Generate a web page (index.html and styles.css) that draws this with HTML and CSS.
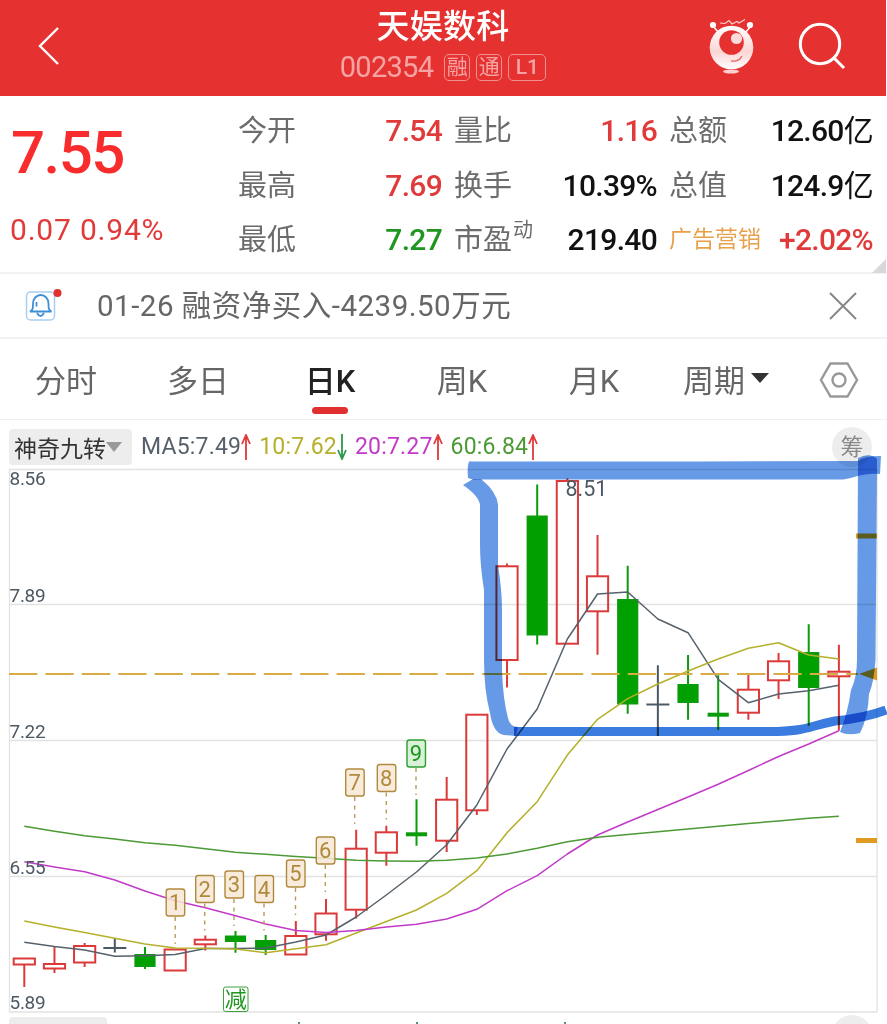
FILE: index.html
```html
<!DOCTYPE html>
<html lang="zh-CN">
<head>
    <meta charset="UTF-8">
    <meta name="viewport" content="width=device-width, initial-scale=1.0">
    <title>天娱数科 002354</title>
    <link rel="stylesheet" href="styles.css">
</head>
<body>
    <div class="app">
        <header class="header">
            <svg class="back" width="24" height="40" viewBox="0 0 24 40">
                <path d="M21 2L3 20L21 38"/>
            </svg>
            <div class="title">
                <h1>天娱数科</h1>
                <div class="code">
                    <span class="code-num">002354</span>
                    <span class="tag">融</span>
                    <span class="tag">通</span>
                    <span class="tag tag-wide">L1</span>
                </div>
            </div>
            <div class="header-icons">
                <svg width="46" height="58" viewBox="0 0 46 58">
                    <defs>
                        <linearGradient id="face" x1="0" y1="0" x2="0" y2="1">
                            <stop offset="0" stop-color="#fff"/>
                            <stop offset="0.6" stop-color="#fcd5d5"/>
                            <stop offset="1" stop-color="#fff"/>
                        </linearGradient>
                    </defs>
                    <path class="antenna" d="M4 9L10 16M42 9L36 16"/>
                    <circle cx="4" cy="8" r="3.1" fill="#fff"/>
                    <circle cx="41" cy="8" r="3.1" fill="#fff"/>
                    <path class="hair" d="M11 6L16 6.500L20 3.500L23 7L28 4.500L30 6L36 2.500"/>
                    <circle cx="22.500" cy="30.500" r="21.800" fill="url(#face)"/>
                    <circle cx="22.500" cy="25.500" r="12.300" fill="#e63131"/>
                    <circle cx="27.500" cy="21.500" r="5.600" fill="#fbdada"/>
                    <path class="smile" d="M22 44Q30 45 33 39"/>
                    <ellipse cx="22" cy="54.500" rx="8" ry="2" fill="#fbd0d0"/>
                </svg>
                <svg class="search" width="48" height="48" viewBox="0 0 48 48">
                    <circle cx="22" cy="22" r="19.700"/>
                    <path d="M36 36L46 46"/>
                </svg>
            </div>
        </header>

        <section class="quote">
            <div class="price">
                <div class="price-now">7.55</div>
                <div class="price-change">0.07 0.94%</div>
            </div>
            <div class="stats">
                <span class="label">今开</span><span class="value red">7.54</span>
                <span class="label">量比</span><span class="value red">1.16</span>
                <span class="label">总额</span><span class="value">12.60<span class="unit">亿</span></span>
                <span class="label">最高</span><span class="value red">7.69</span>
                <span class="label">换手</span><span class="value">10.39%</span>
                <span class="label">总值</span><span class="value">124.9<span class="unit">亿</span></span>
                <span class="label">最低</span><span class="value green">7.27</span>
                <span class="label">市盈<sup>动</sup></span><span class="value">219.40</span>
                <span class="label sector">广告营销</span><span class="value red">+2.02%</span>
            </div>
            <div class="corner"></div>
        </section>

        <section class="notice">
            <svg class="bell" width="38" height="34" viewBox="0 0 38 34">
                <rect x="1.500" y="4" width="28" height="28" rx="4"/>
                <path class="bell-line" d="M5 23.500C8 22 8 20 8 16C8 4 23.500 4 23.500 16C23.500 20 23.500 22 26.500 23.500ZM11.500 14V18.500M12 25Q15.500 31 19 25"/>
                <circle cx="32.500" cy="5" r="4"/>
            </svg>
            <span class="notice-text">01-26 融资净买入-4239.50万元</span>
            <svg class="close" width="30" height="30" viewBox="0 0 30 30">
                <path d="M2 2L28 28M28 2L2 28"/>
            </svg>
        </section>

        <nav class="tabs">
            <span class="tab">分时</span>
            <span class="tab">多日</span>
            <span class="tab active">日K</span>
            <span class="tab">周K</span>
            <span class="tab">月K</span>
            <span class="tab">周期<i class="caret"></i></span>
            <span class="tab">
                <svg class="settings" width="40" height="36" viewBox="0 0 40 36">
                    <path d="M11.500 1.500H28.500L38 18L28.500 34.500H11.500L2 18Z"/>
                    <circle cx="20" cy="18" r="6.500"/>
                </svg>
            </span>
        </nav>

        <section class="indicators">
            <span class="picker">神奇九转<i class="caret"></i></span>
            <span class="ma ma5">MA5:7.49</span><svg class="arrow up" viewBox="0 0 10 26"><path d="M5 26V1M1 10L5 1L9 10"/></svg>
            <span class="ma ma10">10:7.62</span><svg class="arrow down" viewBox="0 0 10 26"><path d="M5 0V25M1 16L5 25L9 16"/></svg>
            <span class="ma ma20">20:7.27</span><svg class="arrow up" viewBox="0 0 10 26"><path d="M5 26V1M1 10L5 1L9 10"/></svg>
            <span class="ma ma60">60:6.84</span><svg class="arrow up" viewBox="0 0 10 26"><path d="M5 26V1M1 10L5 1L9 10"/></svg>
            <span class="chips">筹</span>
        </section>

        <svg class="chart" id="chart" width="887" height="545" viewBox="0 469 887 545">
            <g class="grid">
                <path d="M9 469.500H877M9 604.500H877M9 740.500H877M9 876.500H877M9 1012H877M9.500 469V1012M877 469V1012"/>
            </g>
            <g id="candles"></g>
            <g id="averages"></g>
            <path class="last-price" d="M9 674H858"/>
            <g id="counts"></g>
            <g class="marks">
                <rect x="856" y="533.500" width="21" height="5"/>
                <rect x="856" y="838" width="21" height="5"/>
                <path d="M859 674L877 667.500V680.500Z"/>
            </g>
            <g class="axis">
                <text x="9.500" y="484.500">8.56</text>
                <text x="9.500" y="602">7.89</text>
                <text x="9.500" y="738">7.22</text>
                <text x="9.500" y="873.500">6.55</text>
                <text x="9.500" y="1008.500">5.89</text>
            </g>
            <text class="high" x="565.500" y="496">8.51</text>
            <g class="reduce">
                <rect x="223.500" y="987" width="24.500" height="24.500" rx="2"/>
                <text x="235.700" y="1007">减</text>
            </g>
            <g class="marker">
                <path d="M469 462Q467 466 468 478L473 479.500H843C856 478 860 473 880 474L881 456Q864 456 858 461L700 461.500H471Q469 461 469 462Z"/>
                <path d="M463 485L473 479L481 479Q497 492 498 505V565Q502 590 502 610V670Q503 700 508 718Q510 727 518 727L516 736L504 735Q493 733 490 713Q484 690 484 660V590Q480 565 480 545V505Q479 496 463 485Z"/>
                <path d="M858 458Q870 452 877 459L875.500 660Q874 682 869 694Q868 718 860 733Q848 736 840 732Q848 712 851 690Q857 677 857 660Z"/>
                <path class="marker-bottom" d="M514 731.500H778C810 730 806 727 835 721Q865 718 886 710"/>
            </g>
        </svg>

        <section class="volume">
            <span class="volume-picker"></span>
            <i class="tick"></i><i class="tick"></i><i class="tick"></i>
            <span class="volume-chips"></span>
        </section>
    </div>

    <script src="chart.js"></script>
</body>
</html>
```
FILE: styles.css
```css
* {
    box-sizing: border-box;
}
body {
    margin: 0;
    background: #fff;
    font-family: Roboto, "Noto Sans CJK SC", sans-serif;
    color: #666;
    overflow: hidden;
}
.app {
    width: 887px;
    height: 1024px;
    overflow: hidden;
}
svg {
    display: block;
    fill: none;
    flex-shrink: 0;
}
.red {
    color: #e03a3a;
}
.green {
    color: #1f961f;
}

/* header */
.header {
    display: flex;
    width: 886px;
    height: 96px;
    background: #e63131;
    color: #fff;
}
.back {
    margin: 26px 0 0 37px;
    stroke: #fff;
    stroke-width: 2.4;
}
.title {
    width: 300px;
    margin-left: 232px;
    text-align: center;
}
.title h1 {
    margin: 6px 0 0;
    font-size: 33px;
    line-height: 42px;
    font-weight: 500;
    letter-spacing: 0.3px;
}
.code {
    display: flex;
    align-items: center;
    justify-content: center;
    height: 30px;
    margin-top: 4px;
    color: #f6a3a3;
}
.code-num {
    margin-right: 11px;
    font-size: 29px;
    letter-spacing: -0.7px;
}
.tag {
    width: 26px;
    height: 27px;
    margin-right: 6px;
    border: 1.5px solid #f29090;
    border-radius: 5px;
    font-size: 21px;
    line-height: 25px;
}
.tag-wide {
    width: 38px;
    margin-right: 0;
    font-weight: 500;
}
.header-icons {
    display: flex;
    margin: 17px 0 0 116px;
}
.antenna {
    stroke: #fff;
    stroke-width: 1.5;
}
.hair {
    stroke: #fbd0d0;
    stroke-width: 1.2;
}
.smile {
    stroke: #e86060;
    stroke-width: 1.3;
}
.search {
    margin: 5px 0 0 43px;
    stroke: #fff;
    stroke-width: 3;
}

/* quote */
.quote {
    position: relative;
    display: flex;
    height: 178px;
    border-bottom: 2px solid #f2f2f2;
}
.price {
    width: 238px;
    padding-left: 10px;
}
.price-now {
    margin: 21px 0 0 1px;
    font-size: 60px;
    line-height: 72px;
    letter-spacing: -1.5px;
    color: #f82c2c;
    font-weight: 500;
}
.price-change {
    margin-top: 23px;
    font-size: 30px;
    line-height: 36px;
    color: #e03a3a;
    letter-spacing: 0.8px;
}
.stats {
    display: grid;
    grid-template-columns: 84px 120px 84px 131px 103px 113px;
    grid-template-rows: repeat(3, 54.5px);
    margin-top: 8px;
    align-items: center;
    font-size: 29px;
    line-height: 40px;
    white-space: nowrap;
}
.label:nth-of-type(6n + 3),
.label:nth-of-type(6n + 5) {
    padding-left: 12px;
}
.label {
    color: #6c6c6c;
}
.label sup {
    font-size: 20px;
    line-height: 0;
    vertical-align: 13px;
    margin-left: 1px;
}
.label.sector {
    font-size: 23px;
    color: #e9a04a;
}
.value {
    font-size: 30px;
    text-align: right;
    font-weight: 500;
    letter-spacing: -0.7px;
}
.value:not(.red):not(.green) {
    color: #111;
}
.unit {
    font-weight: 400;
}
.corner {
    position: absolute;
    right: 1px;
    bottom: -1px;
    border-left: 14px solid transparent;
    border-bottom: 14px solid #d8d8d8;
}

/* notice */
.notice {
    display: flex;
    align-items: center;
    height: 65px;
    border-bottom: 2px solid #f2f2f2;
}
.bell {
    margin: -2px 0 0 25px;
    stroke: #a9cdee;
    stroke-width: 1.5;
}
.bell .bell-line {
    stroke: #3d8ed6;
    stroke-width: 1.8;
}
.bell circle {
    fill: #e03030;
    stroke: none;
}
.notice-text {
    width: 731px;
    margin-left: 34px;
    font-size: 29.5px;
    line-height: 40px;
    letter-spacing: 0.5px;
}
.close {
    stroke: #888;
    stroke-width: 2;
}

/* tabs */
.tabs {
    display: grid;
    grid-template-columns: repeat(6, 132px) 93px;
    height: 81px;
    border-bottom: 1px solid #efefef;
}
.tab {
    position: relative;
    display: flex;
    align-items: center;
    justify-content: center;
    height: 80px;
    padding-bottom: 2px;
    font-size: 31px;
}
.tab.active {
    font-weight: 500;
    color: #222;
}
.tab.active::after {
    content: "";
    position: absolute;
    left: 48px;
    bottom: 5px;
    width: 36px;
    height: 7px;
    border-radius: 4px;
    background: #e03030;
}
.caret {
    border: 9px solid transparent;
    border-top: 10px solid #333;
    border-bottom: 0;
}
.tab .caret {
    margin-left: 6px;
}
.settings {
    margin-top: 4px;
    stroke: #999;
    stroke-width: 2.4;
}

/* indicators */
.indicators {
    display: flex;
    align-items: center;
    height: 49px;
    padding: 4px 0 0 9px;
    font-size: 23px;
}
.picker {
    display: flex;
    align-items: center;
    width: 123px;
    height: 36px;
    padding-left: 5px;
    margin-right: 9px;
    border-radius: 4px;
    background: #ededed;
    color: #333;
    white-space: nowrap;
}
.picker .caret {
    border-width: 10px 8px 0;
    border-top-color: #999;
}
.ma {
    letter-spacing: 0.2px;
}
.ma5 {
    color: #56616b;
}
.ma10 {
    color: #b5b02a;
}
.ma20 {
    color: #c23ac8;
}
.ma60 {
    color: #4b9a35;
}
.arrow {
    width: 10px;
    height: 26px;
    margin-right: 8px;
    stroke-width: 1.8;
}
.up {
    stroke: #e03a3a;
}
.down {
    stroke: #2c9a4c;
}
.chips {
    width: 40px;
    height: 40px;
    margin: 0 15px 0 auto;
    border-radius: 50%;
    background: #ededed;
    color: #888;
    line-height: 42px;
    text-align: center;
}

/* chart */
.chart {
    position: relative;
    overflow: visible;
    font-size: 19px;
}
.grid {
    stroke: #e2e2e2;
    stroke-width: 1.3;
}
.candle-up {
    stroke: #dc3a3a;
    stroke-width: 2;
}
.candle-down {
    stroke: #0a9c0a;
    stroke-width: 2;
    fill: #00a000;
}
.candle-flat {
    stroke: #4c5964;
    stroke-width: 2;
}
.line {
    stroke-width: 1.5;
    stroke-linejoin: round;
}
.line5 {
    stroke: #56616b;
}
.line10 {
    stroke: #b5b02a;
}
.line20 {
    stroke: #c23ac8;
}
.line60 {
    stroke: #4b9a35;
}
.last-price {
    stroke: #d8ab45;
    stroke-width: 1.8;
    stroke-dasharray: 28.3 8.1;
}
.marks {
    fill: #e09a20;
}
.axis,
.high {
    fill: #4c5964;
}
.axis {
    letter-spacing: -0.3px;
}
.high {
    font-size: 21.5px;
}
.count rect {
    fill: #f8e8d6;
    fill-opacity: 0.85;
    stroke: #b08a3c;
    stroke-width: 1.4;
}
.count text {
    fill: #b08a3c;
    font-size: 22px;
    text-anchor: middle;
}
.count path {
    stroke: #b89a58;
    stroke-width: 1.4;
    stroke-dasharray: 4 4.5;
}
.count-last rect {
    fill: #d0f0d0;
    stroke: #2f9e2f;
}
.count-last text {
    fill: #1f961f;
}
.reduce rect {
    stroke: #3fa03f;
    fill: #fff;
}
.reduce text {
    fill: #1f961f;
    font-size: 22px;
    text-anchor: middle;
}
.marker path {
    fill: #6699e6;
    mix-blend-mode: multiply;
}
.marker .marker-bottom {
    fill: none;
    stroke: #3a7be0;
    stroke-width: 9;
}

/* volume */
.volume {
    display: flex;
    height: 10px;
    padding: 3px 0 0 9px;
}
.volume-picker {
    width: 98px;
    height: 36px;
    margin-right: 191px;
    border-radius: 4px;
    background: #ededed;
}
.tick {
    width: 2px;
    height: 4px;
    margin: 5px 116px 0 0;
    background: #5d8f76;
}
.tick + .tick {
    margin-right: 146px;
}
.volume-chips {
    flex-shrink: 0;
    width: 40px;
    height: 40px;
    margin: -2px 15px 0 auto;
    border-radius: 50%;
    background: #ededed;
}
```
FILE: chart.js
```js
const START_X = 24.3;
const STEP = 30.17;

// [type, high, body top, body bottom, low]
const candles = [
    ['up', 958.5, 958.5, 964.5, 987],
    ['up', 947, 964, 968.5, 973],
    ['up', 943, 946, 962.5, 967],
    ['flat', 938.5, 948, 948, 952.5],
    ['down', 947, 955, 966, 969],
    ['up', 949.5, 949.5, 970.5, 970.5],
    ['up', 935.5, 939.7, 944.3, 950.5],
    ['down', 931, 936.5, 941, 952.7],
    ['down', 935, 941, 949, 955],
    ['up', 921, 936, 954.5, 954.5],
    ['up', 899, 913.5, 934.3, 940.7],
    ['up', 829.7, 848.7, 909.7, 918.5],
    ['up', 825.7, 832.3, 852.7, 865.7],
    ['down', 799.3, 833.3, 835.3, 845.7],
    ['up', 777, 799.7, 840.7, 852],
    ['up', 714.7, 714.7, 810.3, 815],
    ['up', 563.5, 566.3, 660, 687.5],
    ['down', 484.5, 516.5, 634.5, 644.5],
    ['up', 478.5, 481, 643.7, 643.7],
    ['up', 535, 576.3, 611.3, 654.7],
    ['down', 565.7, 600, 703.5, 713.7],
    ['flat', 665.3, 704.5, 704.5, 736],
    ['down', 655, 685, 702, 719.7],
    ['down', 675.3, 713.7, 715.7, 729.7],
    ['up', 674.7, 689.7, 712.7, 719.7],
    ['up', 653, 661.3, 680.3, 699],
    ['down', 624.3, 653, 687, 725.7],
    ['up', 644.7, 671.7, 676.3, 730.7]
];

const averages = {
    line5: [942.3, 946.5, 950, 956.3, 955.7, 954.5, 948.5, 948.5, 948, 942, 935, 917, 895, 872,
        844.7, 805, 749, 709, 639, 594, 592, 619, 632.7, 679.3, 702.7, 694, 690.7, 685.3],
    line10: [921, 927, 932.5, 938.3, 944, 948, 948.3, 949, 952.7, 948.8, 944.7, 933, 921.5, 910,
        893.3, 870.7, 832.7, 801.7, 755, 719.3, 698.7, 684, 671, 659, 648.3, 642.7, 655, 659],
    line20: [861.7, 867, 871.7, 880, 891, 900.7, 907.7, 915.7, 924, 930.5, 932.5, 930.5, 927, 924.3,
        919, 909.3, 890.7, 875.7, 854, 835, 822, 809.5, 797, 784.3, 770.5, 756.5, 744, 730.7],
    line60: [826.3, 831.3, 835.7, 839, 842.7, 845.3, 848.7, 852.3, 854.3, 856.5, 858.3, 860.3, 861, 861.3,
        860.3, 858, 854, 848.3, 841.7, 837.3, 834.5, 831.7, 829, 826.3, 823.5, 821, 818.3, 816.3]
};

// [center x, top]
const counts = [
    [175.2, 889], [204.7, 875.5], [234, 871], [264, 875.5], [295.5, 860],
    [325.3, 837], [354.7, 769], [386.3, 764.5], [416, 740]
];

function xAt(i) {
    return START_X + i * STEP;
}

let html = '';
candles.forEach(([type, high, top, bottom, low], i) => {
    const x = xAt(i);
    html += `<g class="candle-${type}"><path d="M${x} ${high}V${top}M${x} ${bottom}V${low}"/>`;
    if (type === 'flat') {
        html += `<path d="M${x - 11.5} ${top}H${x + 11.5}"/>`;
    } else {
        const w = type === 'up' ? 10.6 : 9.6;
        html += `<rect x="${x - w}" y="${top}" width="${w * 2}" height="${bottom - top}"/>`;
    }
    html += '</g>';
});
document.getElementById('candles').innerHTML = html;

html = '';
for (const name in averages) {
    const points = averages[name].map((y, i) => `${xAt(i)},${y}`).join(' ');
    html += `<polyline class="line ${name}" points="${points}"/>`;
}
document.getElementById('averages').innerHTML = html;

html = '';
counts.forEach(([x, y], i) => {
    html += `<g class="count${i === 8 ? ' count-last' : ''}">
        <rect x="${x - 9}" y="${y}" width="18.5" height="27" rx="2.5"/>
        <text x="${x}" y="${y + 21}">${i + 1}</text>
        <path d="M${x} ${y + 28}V${y + 55}"/>
    </g>`;
});
document.getElementById('counts').innerHTML = html;
```
